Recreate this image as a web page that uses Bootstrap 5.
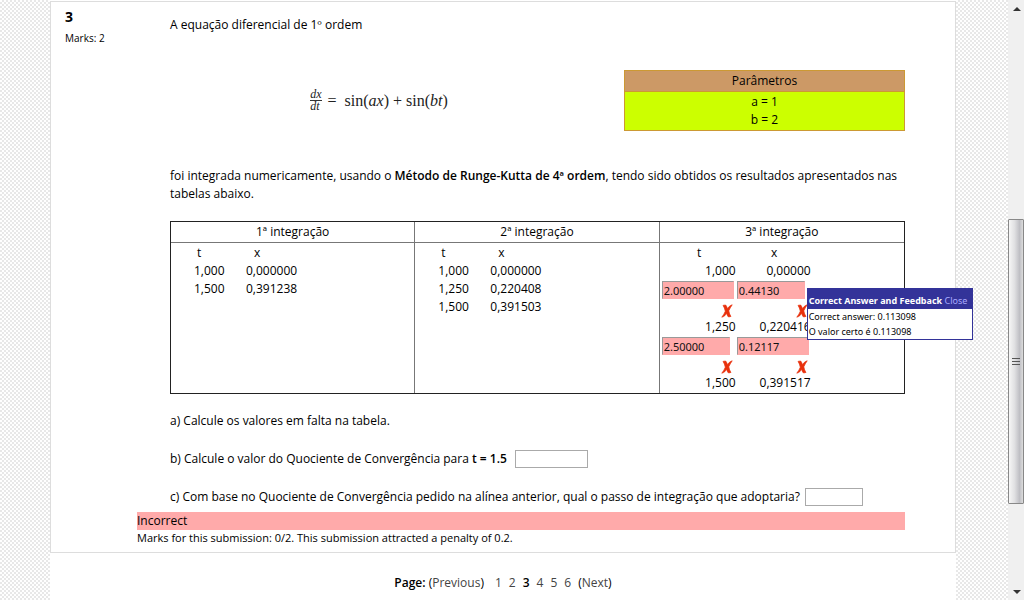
<!DOCTYPE html>
<html lang="pt">
<head>
<meta charset="utf-8">
<meta name="viewport" content="width=device-width, initial-scale=1">
<title>Questionário - Página 3</title>
<link href="https://cdn.jsdelivr.net/npm/bootstrap@5.3.0/dist/css/bootstrap.min.css" rel="stylesheet">
<style>
body{font:12px/18px "Open Sans","Noto Sans",sans-serif;color:#000;
  background-color:#fff;background-image:conic-gradient(#e8e8e8 25%,#fff 0 50%,#e8e8e8 0 75%,#fff 0);background-size:4px 4px}
b{font-weight:600}
p{margin:0}
.sheet{margin:0 52px 0 50px}
.question{border:1px solid #ddd;margin-top:1px;padding:8px 50px 6px 14px}
.info{width:72px;flex:none}
.qno{font-size:14px;font-weight:700;line-height:14px;margin-bottom:6px}
.fine{font-size:10px;line-height:16px}
.ablock{padding:6px 0 6px 33px}
.eqrow{gap:36px;margin:36px 0}
.formula{font-family:"Liberation Serif",serif;font-size:16px;line-height:18px;color:#222}
.frac{font-size:12px;line-height:11px;margin-right:6px}
.frac span:first-child{border-bottom:1px solid #333}
.params{width:281px;border-collapse:separate;border-spacing:0;text-align:center;border:1px solid #c93}
.params th{background:#c96;font-weight:400;height:21px;padding:0;border-bottom:1px solid #c93}
.params td{background:#cf0;padding:1px 0}
.results{width:100%;table-layout:fixed;border-collapse:separate;border-spacing:0;border:1px solid #222;margin:18px 0}
.results>thead>tr>th{font-weight:400;text-align:center;height:21px;padding:0;border:solid #777;border-width:0 1px 1px 0}
.results>tbody>tr>td{vertical-align:top;padding:1px 2px;border-right:1px solid #777}
.results>*>tr>:last-child{border-right:0!important}
.series{margin-left:21px}
.series th,.series td{font-weight:400;padding:0 18px 0 0;height:18px}
.series th{padding-left:3px}
.series th:last-child{padding-left:8px}
.series tr>:first-child{width:52px}
.gaps td,.gaps th{width:75px;height:18px;padding:0 1px;font-weight:400;text-align:right}
.gaps th{text-align:center}
.gaps tr.ask td{height:38px;vertical-align:top;padding:1px 0 0;position:relative}
.wrong{display:block;background:#faa;border:1px solid;border-color:#999 #faa #faa #999;border-radius:0;font:11px/14px "Noto Sans",sans-serif;padding:0 1px;height:18px;color:#111}
.w1{width:72px}.w2{width:68px}
.blank{border:1px solid #aaa;height:18px;padding:0 2px;margin-left:5px;background:#fff}
.w3{width:73px}.w4{width:58px}
.mark-x{display:block;width:12px;height:14px;margin:5px 4px 0 auto}
.pop{position:absolute;left:70px;top:8px;z-index:5;min-width:166px;text-align:left;background:#fff;border:1px solid #339;font:9px/15px "Noto Sans",sans-serif;white-space:nowrap}
.pop-head{background:#339;color:#fff;padding:4px 1px 1px}
.pop-head b{font-weight:700}
.pop-head a{color:#aaf;text-decoration:none}
.pop p{padding-left:1px}
.q-lines{gap:20px}
.verdict{background:#faa;height:18px}
.note{font-size:11px;line-height:16px}
.pages{padding:21px 0 8px;gap:7px}
.pages a{color:#444;text-decoration:none}
.vbar{width:16px;background:#f0f0f0}
.thumb{height:285px;margin:auto 0 80px;border:1px solid #888;border-radius:1px;background:linear-gradient(90deg,#f6f6f6,#e0e0e2 40%,#bfbfc4 75%,#dcdcdc)}
</style>
</head>
<body>
<svg class="d-none"><symbol id="cross" viewBox="0 0 12 14"><path fill="#e8300c" stroke="#e8300c" stroke-width=".7" stroke-linejoin="round" d="M2 1.4 4.6 1C5.6 2 6 3.4 6.5 4.8 7.4 3.2 8.6 1.6 11.2 0.8 9.8 3 8.6 4.8 7.8 6.8 8.2 9 8.8 11 10 12.4L7.6 13C6.4 12 6 10.4 5.6 9.2 4.6 11 3.4 12.6 0.8 13.2 2.4 11.2 3.6 9.2 4.3 7.2 3.8 5 3.2 3 2 1.4Z"/></symbol></svg>
<div class="d-flex min-vh-100">
<div class="sheet bg-white flex-grow-1">
<main class="question d-flex">
  <div class="info"><div class="qno">3</div><div class="fine">Marks: 2</div></div>
  <div class="flex-grow-1">
    <div class="ablock">
      <p>A equação diferencial de 1º ordem</p>
      <div class="d-flex eqrow">
        <div class="formula d-flex flex-grow-1 align-items-center justify-content-center"><span class="frac d-inline-flex flex-column"><span><i>dx</i></span><span><i>dt</i></span></span><span>=&nbsp; sin(<i>ax</i>) + sin(<i>bt</i>)</span></div>
        <table class="params"><thead><tr><th>Parâmetros</th></tr></thead><tbody><tr><td>a = 1<br>b = 2</td></tr></tbody></table>
      </div>
      <p>foi integrada numericamente, usando o <b>Método de Runge-Kutta de 4ª ordem</b>, tendo sido obtidos os resultados apresentados nas tabelas abaixo.</p>
      <table class="results">
        <thead><tr><th>1ª integração</th><th>2ª integração</th><th>3ª integração</th></tr></thead>
        <tbody><tr>
          <td><table class="series">
            <tr><th>t</th><th>x</th></tr>
            <tr><td>1,000</td><td>0,000000</td></tr>
            <tr><td>1,500</td><td>0,391238</td></tr>
          </table></td>
          <td><table class="series">
            <tr><th>t</th><th>x</th></tr>
            <tr><td>1,000</td><td>0,000000</td></tr>
            <tr><td>1,250</td><td>0,220408</td></tr>
            <tr><td>1,500</td><td>0,391503</td></tr>
          </table></td>
          <td><table class="gaps">
            <tr><th>t</th><th>x</th></tr>
            <tr><td>1,000</td><td>0,00000</td></tr>
            <tr class="ask">
              <td><input class="wrong w1" aria-label="t 1" value="2.00000"><svg class="mark-x"><use href="#cross"/></svg></td>
              <td><input class="wrong w2" aria-label="x 1" value="0.44130"><svg class="mark-x"><use href="#cross"/></svg>
                <div class="pop" role="dialog"><div class="pop-head"><b>Correct Answer and Feedback</b> <a href="#">Close</a></div><p>Correct answer: 0.113098</p><p>O valor certo é 0.113098</p></div></td>
            </tr>
            <tr><td>1,250</td><td>0,220416</td></tr>
            <tr class="ask">
              <td><input class="wrong w2" aria-label="t 2" value="2.50000"><svg class="mark-x"><use href="#cross"/></svg></td>
              <td><input class="wrong w1" aria-label="x 2" value="0.12117"><svg class="mark-x"><use href="#cross"/></svg></td>
            </tr>
            <tr><td>1,500</td><td>0,391517</td></tr>
          </table></td>
        </tr></tbody>
      </table>
      <div class="q-lines d-flex flex-column">
        <p>a) Calcule os valores em falta na tabela.</p>
        <div class="d-flex"><label for="qb">b) Calcule o valor do Quociente de Convergência para <b>t = 1.5</b></label><input id="qb" class="blank w3 ms-2"></div>
        <div class="d-flex"><label for="qc">c) Com base no Quociente de Convergência pedido na alínea anterior, qual o passo de integração que adoptaria?</label><input id="qc" class="blank w4"></div>
      </div>
    </div>
    <div class="verdict">Incorrect</div>
    <div class="note">Marks for this submission: 0/2. This submission attracted a penalty of 0.2.</div>
  </div>
</main>
<nav class="pages d-flex justify-content-center" aria-label="Páginas"><span><b>Page:</b> (<a href="#">Previous</a>)</span><span class="ps-1"><a href="#">1</a></span><a href="#">2</a><b>3</b><a href="#">4</a><a href="#">5</a><a href="#">6</a><span>(<a href="#">Next</a>)</span></nav>
</div>
<div class="vbar d-flex flex-column flex-shrink-0" aria-hidden="true">
  <svg width="16" height="16"><path d="M5 11L9 7l4 4z" fill="#333"/></svg>
  <div class="thumb d-flex align-items-center justify-content-center"><svg width="8" height="10"><path d="M0 1.5h8M0 4.5h8M0 7.5h8" stroke="#555"/></svg></div>
  <svg width="16" height="16"><path d="M5 6l4 4 4-4z" fill="#333"/></svg>
</div>
</div>
<script src="https://cdn.jsdelivr.net/npm/bootstrap@5.3.0/dist/js/bootstrap.bundle.min.js"></script>
</body>
</html>
